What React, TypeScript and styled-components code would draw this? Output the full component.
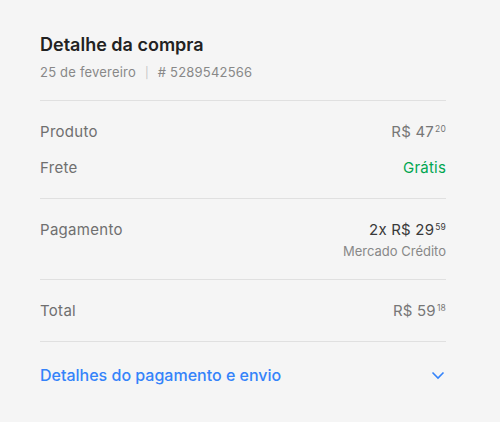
import React from "react";
import styled, { createGlobalStyle } from "styled-components";

const GlobalStyle = createGlobalStyle`
  html, body {
    margin: 0;
    padding: 0;
    background: #f5f5f5;
    font-family: Inter, "Open Sans", "Liberation Sans", sans-serif;
  }
`;

function Price({ value, cents }: { value: string; cents: string }) {
  return (
    <span>
      {value}
      <Cents>{cents}</Cents>
    </span>
  );
}

function App() {
  return (
    <>
      <GlobalStyle />
      <Card>
        <Header>
          <Title>Detalhe da compra</Title>
          <Subtitle>
            25 de fevereiro<Sep>|</Sep># 5289542566
          </Subtitle>
        </Header>
        <Section>
          <Row>
            <Label>Produto</Label>
            <Value>
              <Price value="R$ 47" cents="20" />
            </Value>
          </Row>
          <Row>
            <Label>Frete</Label>
            <Value $green>Grátis</Value>
          </Row>
        </Section>
        <Section>
          <Row>
            <Label>Pagamento</Label>
            <ValueStack>
              <Value $strong>
                <Price value="2x R$ 29" cents="59" />
              </Value>
              <Note>Mercado Crédito</Note>
            </ValueStack>
          </Row>
        </Section>
        <Section>
          <Row>
            <Label>Total</Label>
            <Value>
              <Price value="R$ 59" cents="18" />
            </Value>
          </Row>
        </Section>
        <Footer>
          <Link>Detalhes do pagamento e envio</Link>
          <svg width="16" height="16" viewBox="0 0 16 16" fill="none">
            <path d="M2.5 5.5 L8 11 L13.5 5.5" stroke="#3483fa" strokeWidth="1.6" />
          </svg>
        </Footer>
      </Card>
    </>
  );
}

const Card = styled.div`
  width: 406px;
  padding: 33px 54px 0 40px;
  display: flex;
  flex-direction: column;
`;

const Header = styled.div`
  display: flex;
  flex-direction: column;
  gap: 7px;
  padding-bottom: 19px;
  border-bottom: 1px solid #e0e0e0;
`;

const Title = styled.div`
  font-size: 18px;
  font-weight: 600;
  color: #222;
  line-height: 24px;
`;

const Subtitle = styled.div`
  font-size: 13px;
  color: #888;
  line-height: 16px;
  letter-spacing: 0.2px;
`;

const Sep = styled.span`
  margin: 0 9px;
  font-size: 11px;
  color: #c4c4c4;
`;

const Section = styled.div`
  display: flex;
  flex-direction: column;
  gap: 16px;
  padding: 21px 0 20px;
  border-bottom: 1px solid #e0e0e0;
`;

const Row = styled.div`
  display: flex;
  justify-content: space-between;
  align-items: flex-start;
`;

const Label = styled.div`
  font-size: 15px;
  color: #6f6f6f;
  line-height: 20px;
  letter-spacing: 0.3px;
`;

const Value = styled.div<{ $green?: boolean; $strong?: boolean }>`
  font-size: 15px;
  line-height: 20px;
  letter-spacing: 0.2px;
  color: ${(p) => (p.$green ? "#00a650" : p.$strong ? "#3a3a3a" : "#777")};
`;

const ValueStack = styled.div`
  display: flex;
  flex-direction: column;
  align-items: flex-end;
  gap: 4px;
`;

const Note = styled.div`
  font-size: 13px;
  color: #888;
  line-height: 15px;
`;

const Cents = styled.sup`
  font-size: 8.5px;
  vertical-align: top;
  position: relative;
  top: -3px;
  margin-left: 1px;
`;

const Footer = styled.div`
  display: flex;
  justify-content: space-between;
  align-items: center;
  padding: 24px 0;
`;

const Link = styled.div`
  font-size: 16px;
  font-weight: 500;
  line-height: 18px;
  color: #3483fa;
`;

export default App;
